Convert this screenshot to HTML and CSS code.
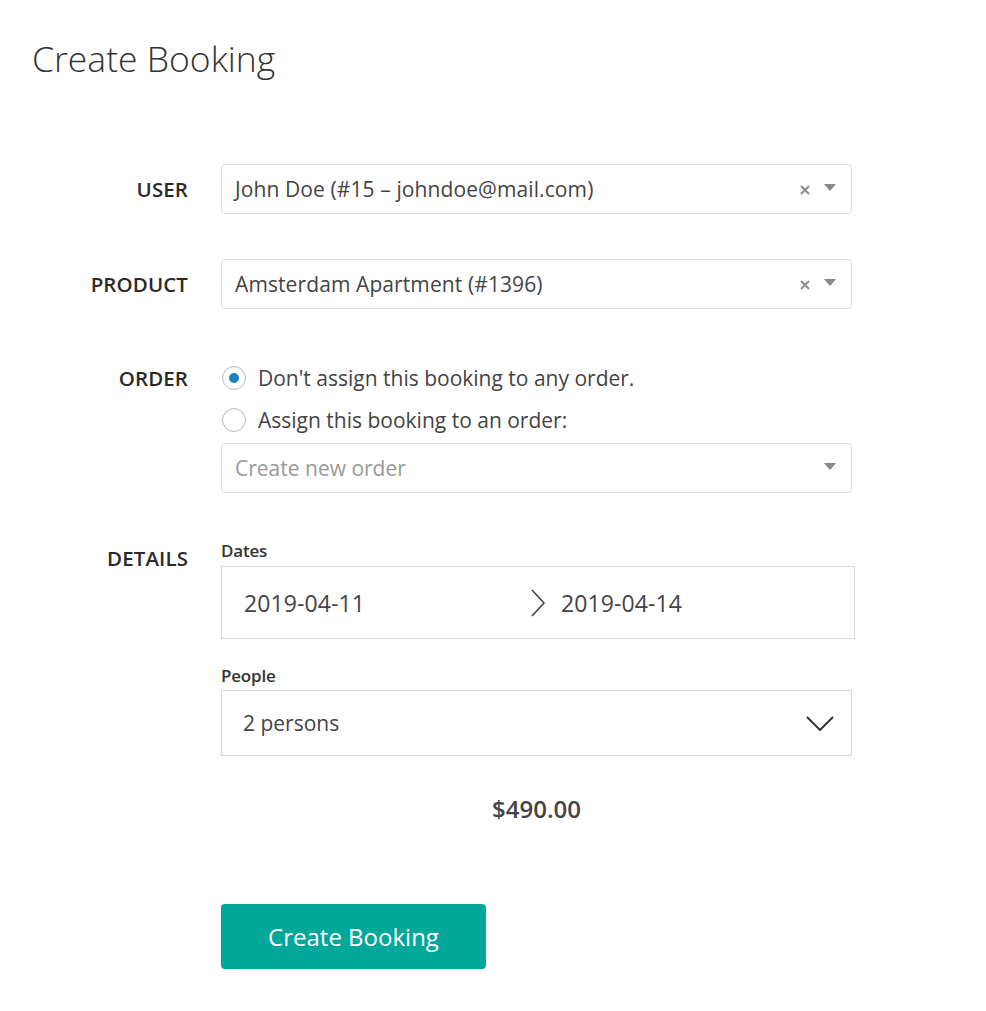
FILE: index.html
```html
<!DOCTYPE html>
<html>
<head>
<meta charset="utf-8">
<link rel="stylesheet" href="styles.css">
</head>
<body>
<div class="page">
  <h1 class="title">Create Booking</h1>
  <div class="form">
    <div class="row row-user">
      <div class="label">USER</div>
      <div class="field">
        <div class="select">
          <span class="value">John Doe (#15 – johndoe@mail.com)</span>
          <svg class="clear" width="12" height="12" viewBox="0 0 12 12"><path d="M2 2 L10 10 M10 2 L2 10" stroke="#8a8a8a" stroke-width="2"/></svg>
          <span class="caret"></span>
        </div>
      </div>
    </div>
    <div class="row row-product">
      <div class="label">PRODUCT</div>
      <div class="field">
        <div class="select">
          <span class="value">Amsterdam Apartment (#1396)</span>
          <svg class="clear" width="12" height="12" viewBox="0 0 12 12"><path d="M2 2 L10 10 M10 2 L2 10" stroke="#8a8a8a" stroke-width="2"/></svg>
          <span class="caret"></span>
        </div>
      </div>
    </div>
    <div class="row row-order">
      <div class="label label-order">ORDER</div>
      <div class="field">
        <div class="radio-line">
          <span class="radio checked"></span>
          <span class="radio-text">Don't assign this booking to any order.</span>
        </div>
        <div class="radio-line">
          <span class="radio"></span>
          <span class="radio-text">Assign this booking to an order:</span>
        </div>
        <div class="select select-order">
          <span class="value placeholder">Create new order</span>
          <span class="caret"></span>
        </div>
      </div>
    </div>
    <div class="row row-details">
      <div class="label label-details">DETAILS</div>
      <div class="field">
        <div class="sub-label">Dates</div>
        <div class="dates">
          <span class="date date-start">2019-04-11</span>
          <svg class="arrow" width="16" height="28" viewBox="0 0 16 28"><path d="M2 1 L14 14 L2 27" fill="none" stroke="#444" stroke-width="1.6"/></svg>
          <span class="date">2019-04-14</span>
        </div>
        <div class="sub-label sub-people">People</div>
        <div class="people">
          <span class="people-value">2 persons</span>
          <svg class="chev" width="28" height="16" viewBox="0 0 28 16"><path d="M1 2 L14 15 L27 2" fill="none" stroke="#333" stroke-width="2"/></svg>
        </div>
        <div class="price">$490.00</div>
        <button class="submit">Create Booking</button>
      </div>
    </div>
  </div>
</div>
</body>
</html>
```

FILE: styles.css
```css
* { box-sizing: border-box; }
body {
  margin: 0;
  background: #fff;
  font-family: "Open Sans", "Noto Sans", "Liberation Sans", sans-serif;
  color: #444;
}
.page {
  padding: 30px 0 0 32px;
}
.title {
  margin: 0;
  font-weight: 300;
  font-size: 35.5px;
  line-height: 56px;
  color: #333;
}
.form {
  margin-top: 78px;
  margin-left: -32px;
}
.row {
  display: grid;
  grid-template-columns: 188px 634px;
  column-gap: 33px;
}
.label {
  text-align: right;
  font-size: 20.5px;
  font-weight: 600;
  color: #2a2a2a;
  line-height: 50px;
  letter-spacing: 0.1px;
}
.row-product { margin-top: 45px; }
.row-order { margin-top: 50px; }
.label-order { line-height: 38px; }
.row-details { margin-top: 48px; }
.label-details { line-height: 30px; margin-top: 2px; }

.select {
  width: 631px;
  height: 50px;
  border: 1px solid #dcdcdc;
  border-radius: 4px;
  display: flex;
  align-items: center;
  padding: 0 15px 0 13px;
  background: #fff;
}
.value {
  flex: 1;
  font-size: 21px;
  color: #444;
  letter-spacing: 0.1px;
}
.placeholder { color: #999; letter-spacing: 0; }
.clear {
  margin-right: 13px;
  margin-top: 1px;
}
.caret {
  width: 0;
  height: 0;
  border-left: 6px solid transparent;
  border-right: 6px solid transparent;
  border-top: 7px solid #888;
  margin-top: -4px;
}
.radio-line {
  display: flex;
  align-items: center;
  height: 42px;
  margin-top: -2px;
}
.radio-line + .radio-line { margin-top: 0; }
.radio {
  width: 24px;
  height: 24px;
  border: 1px solid #bbb;
  border-radius: 50%;
  margin: 0 12px 0 1px;
  display: flex;
  align-items: center;
  justify-content: center;
  box-shadow: inset 0 1px 2px rgba(0,0,0,0.08);
}
.radio.checked::after {
  content: "";
  width: 10px;
  height: 10px;
  border-radius: 50%;
  background: #1a7fc1;
}
.radio-text {
  font-size: 21px;
  color: #444;
}
.select-order { margin-top: 2px; }

.sub-label {
  font-size: 17px;
  font-weight: 600;
  color: #333;
  line-height: 20px;
  letter-spacing: -0.2px;
}
.dates {
  margin-top: 5px;
  width: 634px;
  height: 73px;
  border: 1px solid #d6d6d6;
  display: flex;
  align-items: center;
  padding-left: 22px;
}
.date {
  font-size: 23px;
  color: #444;
  letter-spacing: 0.1px;
}
.date-start { width: 286px; }
.arrow { margin-right: 15px; }
.sub-people { margin-top: 27px; }
.people {
  margin-top: 4px;
  width: 631px;
  height: 66px;
  border: 1px solid #d6d6d6;
  display: flex;
  align-items: center;
  justify-content: space-between;
  padding: 0 17px 0 21px;
}
.people-value {
  font-size: 21px;
  color: #444;
}
.price {
  width: 631px;
  text-align: center;
  margin-top: 38px;
  font-size: 24px;
  font-weight: 600;
  color: #444;
  line-height: 30px;
}
.submit {
  margin-top: 80px;
  width: 265px;
  height: 65px;
  border: none;
  border-radius: 4px;
  background: #00a89a;
  color: #fff;
  font-family: inherit;
  font-size: 24px;
  cursor: pointer;
}
```
